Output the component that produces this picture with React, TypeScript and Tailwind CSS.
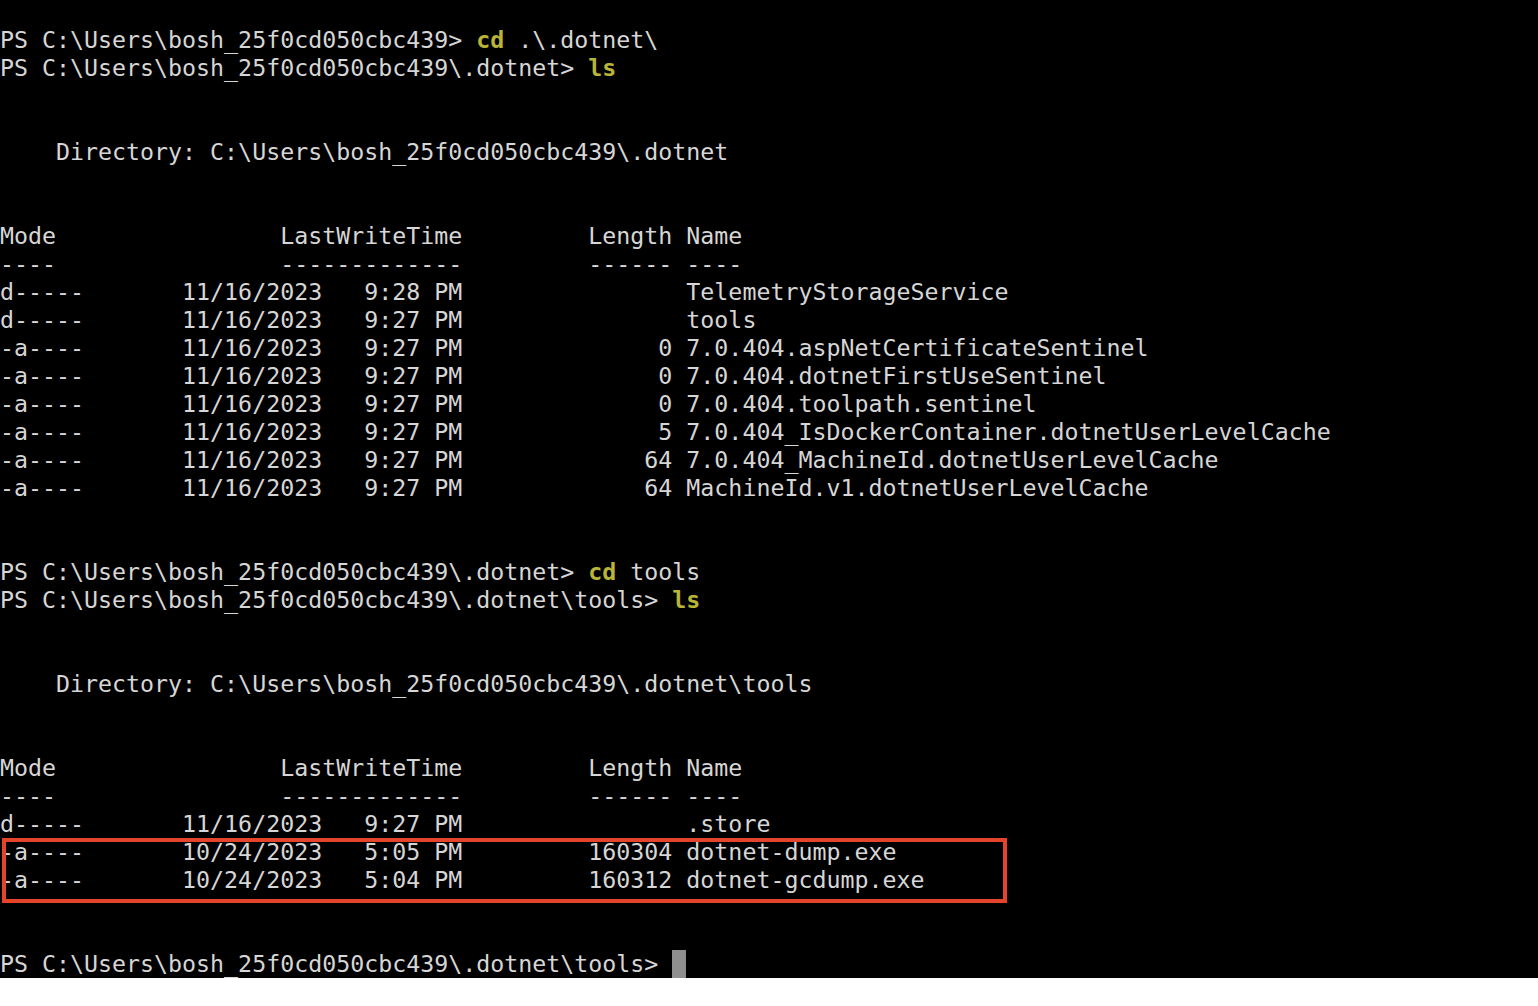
import React from 'react';

const PROMPT = 'PS C:\\Users\\bosh_25f0cd050cbc439';

type Entry = { mode: string; date: string; time: string; len: string; name: string };

const firstDir: Entry[] = [
    { mode: 'd-----', date: '11/16/2023', time: '9:28 PM', len: '', name: 'TelemetryStorageService' },
    { mode: 'd-----', date: '11/16/2023', time: '9:27 PM', len: '', name: 'tools' },
    { mode: '-a----', date: '11/16/2023', time: '9:27 PM', len: '0', name: '7.0.404.aspNetCertificateSentinel' },
    { mode: '-a----', date: '11/16/2023', time: '9:27 PM', len: '0', name: '7.0.404.dotnetFirstUseSentinel' },
    { mode: '-a----', date: '11/16/2023', time: '9:27 PM', len: '0', name: '7.0.404.toolpath.sentinel' },
    { mode: '-a----', date: '11/16/2023', time: '9:27 PM', len: '5', name: '7.0.404_IsDockerContainer.dotnetUserLevelCache' },
    { mode: '-a----', date: '11/16/2023', time: '9:27 PM', len: '64', name: '7.0.404_MachineId.dotnetUserLevelCache' },
    { mode: '-a----', date: '11/16/2023', time: '9:27 PM', len: '64', name: 'MachineId.v1.dotnetUserLevelCache' },
];

const toolsStore: Entry = { mode: 'd-----', date: '11/16/2023', time: '9:27 PM', len: '', name: '.store' };

const toolsExes: Entry[] = [
    { mode: '-a----', date: '10/24/2023', time: '5:05 PM', len: '160304', name: 'dotnet-dump.exe' },
    { mode: '-a----', date: '10/24/2023', time: '5:04 PM', len: '160312', name: 'dotnet-gcdump.exe' },
];

const fmt = (e: Entry) =>
    e.mode.padEnd(13) + e.date + '   ' + e.time + ' '.repeat(9) + e.len.padStart(6) + ' ' + e.name;

const Line: React.FC<{ children?: React.ReactNode }> = ({ children }) => (
    <div className="h-[28px] leading-[28px] whitespace-pre">{children ?? ' '}</div>
);

const Cmd: React.FC<{ children: React.ReactNode }> = ({ children }) => (
    <span className="text-[#bab536] font-bold">{children}</span>
);

const Header = () => (
    <>
        <Line>{'Mode'.padEnd(20) + 'LastWriteTime'.padEnd(22) + 'Length Name'}</Line>
        <Line>{'----'.padEnd(20) + '-------------'.padEnd(22) + '------ ----'}</Line>
    </>
);

export default function App() {
    return (
        <div className="min-h-screen bg-white">
            <div
                className="h-[978px] bg-black pt-[26px] text-[#d6d6d6] text-[23.27px] overflow-hidden"
                style={{ fontFamily: '"DejaVu Sans Mono", "Liberation Mono", monospace' }}
            >
                <Line>{PROMPT}{'> '}<Cmd>cd</Cmd>{' .\\.dotnet\\'}</Line>
                <Line>{PROMPT}{'\\.dotnet> '}<Cmd>ls</Cmd></Line>
                <Line />
                <Line />
                <Line>{'    Directory: C:\\Users\\bosh_25f0cd050cbc439\\.dotnet'}</Line>
                <Line />
                <Line />
                <Header />
                {firstDir.map(e => <Line key={e.name}>{fmt(e)}</Line>)}
                <Line />
                <Line />
                <Line>{PROMPT}{'\\.dotnet> '}<Cmd>cd</Cmd>{' tools'}</Line>
                <Line>{PROMPT}{'\\.dotnet\\tools> '}<Cmd>ls</Cmd></Line>
                <Line />
                <Line />
                <Line>{'    Directory: C:\\Users\\bosh_25f0cd050cbc439\\.dotnet\\tools'}</Line>
                <Line />
                <Line />
                <Header />
                <Line>{fmt(toolsStore)}</Line>
                {/* highlighted rows */}
                <div className="relative">
                    {toolsExes.map(e => <Line key={e.name}>{fmt(e)}</Line>)}
                    <div className="absolute left-[2px] top-0 w-[1005px] h-[65px] border-[4px] border-[#e4432c] pointer-events-none" />
                </div>
                <Line />
                <Line />
                <div className="h-[28px] leading-[28px] whitespace-pre flex items-center">
                    <span>{PROMPT}{'\\.dotnet\\tools> '}</span>
                    <span className="inline-block w-[14px] h-[28px] bg-[#8f8f8f]" />
                </div>
            </div>
        </div>
    );
}
